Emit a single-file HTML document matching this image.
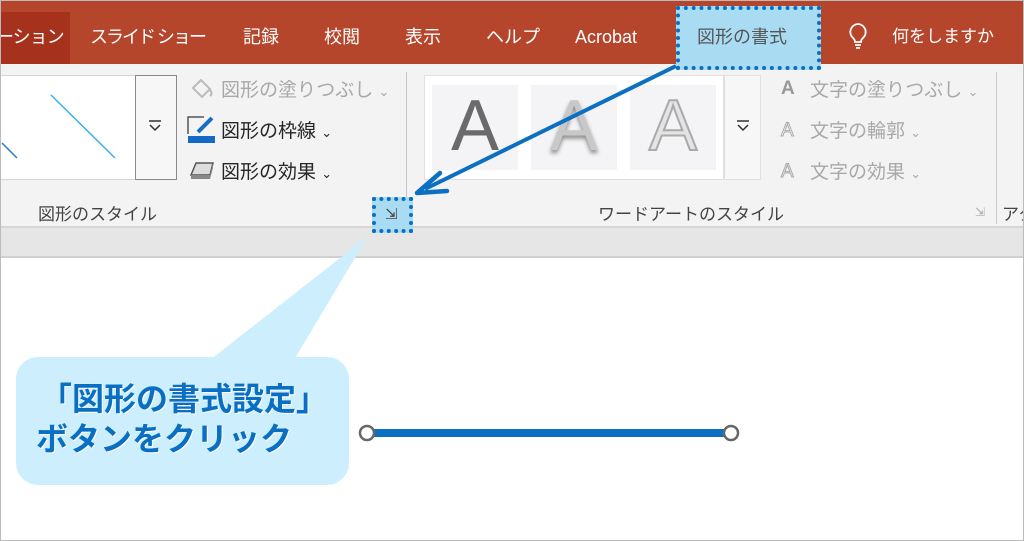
<!DOCTYPE html>
<html><head><meta charset="utf-8"><style>
*{margin:0;padding:0;box-sizing:border-box}
body{width:1024px;height:541px;overflow:hidden;background:#fff;font-family:"Liberation Sans","Noto Sans CJK JP",sans-serif;position:relative}
.a{position:absolute;white-space:nowrap}
.tab{color:#fff;font-size:18px;top:25px;line-height:24px}
.g{color:#a8a8a8;font-size:19px;line-height:24px}
.d{color:#262626;font-size:19px;line-height:24px}
</style></head><body>
<div class="a" style="left:0;top:0;width:1024px;height:64px;background:#b5452b"></div>
<div class="a" style="left:0;top:12px;width:70px;height:52px;background:#a6311d"></div>
<div class="a tab" style="left:-4px;letter-spacing:-1px">ーション</div>
<div class="a tab" style="left:90px;letter-spacing:-2px">スライド ショー</div>
<div class="a tab" style="left:243px">記録</div>
<div class="a tab" style="left:324px">校閲</div>
<div class="a tab" style="left:405px">表示</div>
<div class="a tab" style="left:486px">ヘルプ</div>
<div class="a tab" style="left:575px">Acrobat</div>
<div class="a tab" style="left:892px;font-size:17px">何をしますか</div>
<svg class="a" style="left:846px;top:22px" width="24" height="30" viewBox="0 0 24 30"><path d="M12 2a8 8 0 0 0-5 14c1.5 1.3 2 2.5 2 4h6c0-1.5.5-2.7 2-4a8 8 0 0 0-5-14z" fill="none" stroke="#fff" stroke-width="1.8"/><path d="M9 23h6M10 26h4" stroke="#fff" stroke-width="1.8"/></svg>
<div class="a" style="left:0;top:64px;width:1024px;height:164px;background:#f3f3f3"></div>
<div class="a" style="left:0;top:226px;width:1024px;height:32px;background:#e6e6e6;border-top:2px solid #d6d6d6;border-bottom:2px solid #d0d0d0"></div>
<!-- shape styles gallery -->
<div class="a" style="left:0;top:75px;width:136px;height:105px;background:#fff;border:1px solid #d5d5d5;border-left:none"></div>
<svg class="a" style="left:0;top:75px" width="136" height="105"><line x1="51" y1="20" x2="115" y2="83" stroke="#3ab0ec" stroke-width="1.5"/><line x1="2" y1="68" x2="17" y2="83" stroke="#2b7ac8" stroke-width="1.5"/></svg>
<div class="a" style="left:135px;top:75px;width:42px;height:105px;border:1px solid #8a8a8a;background:#f7f7f7"></div>
<svg class="a" style="left:148px;top:120px" width="14" height="12"><path d="M1 1h12M2 5l5 5 5-5" stroke="#333" stroke-width="1.5" fill="none"/></svg>
<div class="a" style="left:406px;top:72px;width:1px;height:152px;background:#c8c8c8"></div>
<div class="a" style="left:996px;top:72px;width:1px;height:152px;background:#c8c8c8"></div>
<svg class="a" style="left:190px;top:78px" width="26" height="22"><path d="M3 10l8-8 9 9-8 8z" fill="none" stroke="#bbb" stroke-width="2"/><path d="M20 12q3 4 0 6" stroke="#bbb" stroke-width="2" fill="none"/></svg>
<div class="a g" style="left:221px;top:79px">図形の塗りつぶし <span style="font-size:13px">⌄</span></div>
<svg class="a" style="left:186px;top:114px" width="30" height="30"><path d="M2 20V3h16" fill="none" stroke="#555" stroke-width="1.5"/><path d="M12 18l14-14" stroke="#1a6cc4" stroke-width="4"/><rect x="2" y="22" width="27" height="7" fill="#1369c3"/></svg>
<div class="a d" style="left:221px;top:120px">図形の枠線 <span style="font-size:13px">⌄</span></div>
<svg class="a" style="left:188px;top:160px" width="28" height="22"><path d="M3 15l5-12h17l-3 12z" fill="#ddd" stroke="#555" stroke-width="1.5"/><path d="M3 15h19l3-12v5l-3 11H3z" fill="#888"/></svg>
<div class="a d" style="left:221px;top:161px">図形の効果 <span style="font-size:13px">⌄</span></div>
<div class="a d" style="left:38px;top:203px;font-size:17px;color:#444">図形のスタイル</div>
<!-- wordart gallery -->
<div class="a" style="left:424px;top:75px;width:300px;height:105px;background:#fff;border:1px solid #e0e0e0"></div>
<div class="a" style="left:724px;top:75px;width:37px;height:105px;border:1px solid #e0e0e0;background:#f7f7f7"></div>
<svg class="a" style="left:736px;top:120px" width="14" height="12"><path d="M1 1h12M2 5l5 5 5-5" stroke="#333" stroke-width="1.5" fill="none"/></svg>
<div class="a" style="left:432px;top:85px;width:86px;height:85px;background:#f4f4f6"></div>
<div class="a" style="left:531px;top:85px;width:86px;height:85px;background:#f4f4f6"></div>
<div class="a" style="left:630px;top:85px;width:86px;height:85px;background:#f4f4f6"></div>
<div class="a" style="left:451px;top:86px;font-size:72px;line-height:80px;color:#6a6a6a">A</div>
<div class="a" style="left:550px;top:86px;font-size:72px;line-height:80px;color:#c8c8c8;text-shadow:0 3px 4px #888">A</div>
<div class="a" style="left:649px;top:86px;font-size:72px;line-height:80px;color:#e4e4e4;-webkit-text-stroke:2px #aaa">A</div>
<div class="a g" style="left:781px;top:77px;font-weight:bold;color:#999">A</div>
<div class="a g" style="left:781px;top:119px;color:#fff;-webkit-text-stroke:1px #aaa">A</div>
<div class="a g" style="left:781px;top:160px;color:#eee;-webkit-text-stroke:1px #aaa">A</div>
<div class="a g" style="left:810px;top:79px">文字の塗りつぶし <span style="font-size:13px">⌄</span></div>
<div class="a g" style="left:810px;top:120px">文字の輪郭 <span style="font-size:13px">⌄</span></div>
<div class="a g" style="left:810px;top:161px">文字の効果 <span style="font-size:13px">⌄</span></div>
<div class="a d" style="left:598px;top:203px;font-size:17px;color:#444">ワードアートのスタイル</div>
<div class="a" style="left:975px;top:205px;color:#aaa;font-size:12px">⇲</div>
<div class="a d" style="left:1002px;top:203px;font-size:17px;color:#444">アク</div>
<!-- highlighted tab -->
<div class="a" style="left:676px;top:6px;width:145px;height:64px;background:#a9dcf2;border:4px dotted #0a6fc0"></div>
<div class="a" style="left:697px;top:25px;font-size:18px;line-height:24px;color:#555">図形の書式</div>
<!-- launcher -->
<div class="a" style="left:372px;top:197px;width:41px;height:36px;background:#a9dcf2;border:4px dotted #0a6fc0"></div>
<div class="a" style="left:385px;top:205px;color:#444;font-size:15px">⇲</div>
<svg class="a" style="left:0;top:0" width="1024" height="541">
<line x1="676" y1="66" x2="425" y2="189" stroke="#0b70c1" stroke-width="4"/>
<path d="M417 193 L440 173 M417 193 L447 191" stroke="#0b70c1" stroke-width="4.5" fill="none" stroke-linecap="round"/>
<path d="M210 360 L368 236 L294 360 Z" fill="#cdeffd"/>
<rect x="16" y="357" width="333" height="128" rx="22" fill="#cdeffd"/>
<line x1="367" y1="433" x2="731" y2="433" stroke="#0b70c1" stroke-width="8"/>
<circle cx="367" cy="433" r="7" fill="#fff" stroke="#666" stroke-width="2.5"/>
<circle cx="731" cy="433" r="7" fill="#fff" stroke="#666" stroke-width="2.5"/>
<rect x="0.5" y="0.5" width="1023" height="540" fill="none" stroke="#bbb"/>
</svg>
<div class="a" style="left:40px;top:380px;font-size:32px;line-height:38px;font-weight:bold;color:#0a6fc2;text-shadow:1px 1px 0 #fff">「図形の書式設定」</div>
<div class="a" style="left:36px;top:420px;font-size:32px;line-height:38px;font-weight:bold;color:#0a6fc2;text-shadow:1px 1px 0 #fff">ボタンをクリック</div>
</body></html>
